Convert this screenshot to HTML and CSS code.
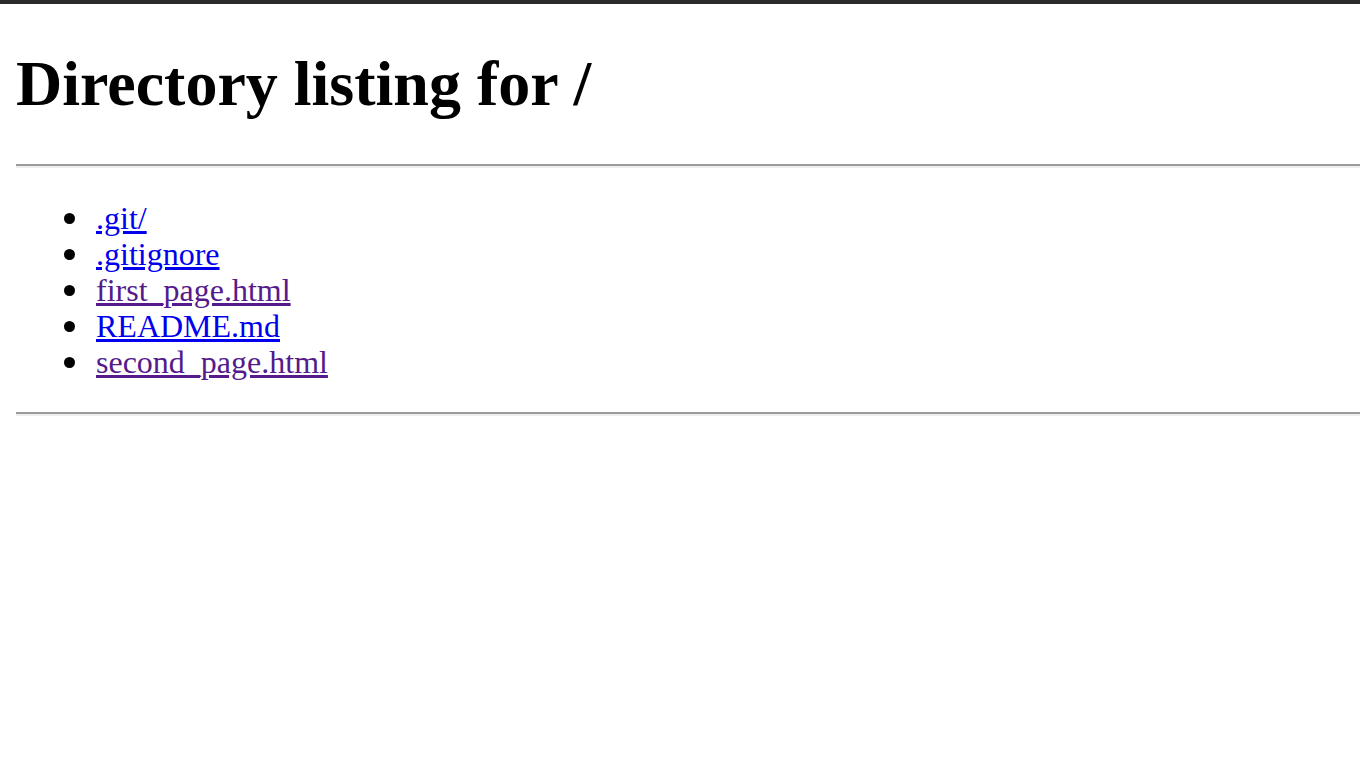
FILE: index.html
```html
<!DOCTYPE html>
<html>
<head>
<meta charset="utf-8">
<title>Directory listing for /</title>
<link rel="stylesheet" href="styles.css">
</head>
<body>
<div class="topbar"></div>
<div class="page">
  <h1 class="title">Directory listing for /</h1>
  <hr class="rule">
  <ul class="listing">
    <li class="item"><a class="link" href="#">.git/</a></li>
    <li class="item"><a class="link" href="#">.gitignore</a></li>
    <li class="item"><a class="link visited" href="#">first_page.html</a></li>
    <li class="item"><a class="link" href="#">README.md</a></li>
    <li class="item"><a class="link visited" href="#">second_page.html</a></li>
  </ul>
  <hr class="rule">
</div>
</body>
</html>
```
FILE: styles.css
```css
html, body {
  margin: 0;
  padding: 0;
  background: #ffffff;
}

body {
  font-family: "Liberation Serif", "Times New Roman", serif;
  color: #000000;
  overflow: hidden;
}

.topbar {
  height: 4px;
  background: #2b2b2b;
}

.page {
  padding: 0 0 0 16px;
}

.title {
  font-size: 64px;
  font-weight: bold;
  line-height: 74px;
  margin: 43px 0;
}

.rule {
  height: 0;
  margin: 16px -20px 16px 0;
  border: none;
  border-top: 2px solid #9a9a9a;
  border-bottom: 2px solid #eeeeee;
}

.listing {
  margin: 32px 0;
  padding-left: 80px;
  font-size: 32px;
  line-height: 36px;
  list-style: none;
}

.item {
  position: relative;
}

.item::before {
  content: "";
  position: absolute;
  left: -32px;
  top: 13px;
  width: 11px;
  height: 11px;
  border-radius: 50%;
  background: #000000;
}

.link {
  color: #0000ee;
  text-decoration: underline;
}

.link.visited {
  color: #551a8b;
}
```
